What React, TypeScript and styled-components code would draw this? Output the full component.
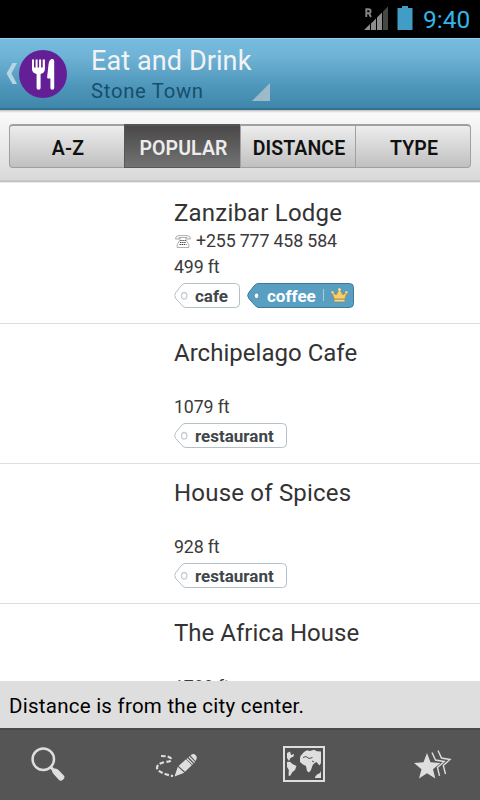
import React from "react";
import styled, { createGlobalStyle, css } from "styled-components";

const GlobalStyle = createGlobalStyle`
  * { box-sizing: border-box; }
  body { margin: 0; background: #fff; font-family: Roboto, "Noto Sans", sans-serif; }
  svg { display: block; flex: none; }
`;

const Screen = styled.div`
  width: 480px;
  height: 800px;
  display: flex;
  flex-direction: column;
  overflow: hidden;
  background: #fff;
`;

const StatusBar = styled.div`
  height: 38px;
  flex: none;
  background: #000;
  display: flex;
  justify-content: flex-end;
  align-items: flex-start;
  padding-right: 9px;
`;

const Clock = styled.span`
  width: 48px;
  margin-left: 10px;
  color: #33b5e5;
  font-size: 24.5px;
  line-height: 40px;
  letter-spacing: 0;
  white-space: nowrap;
`;

const Header = styled.header`
  height: 72px;
  flex: none;
  display: flex;
  background: linear-gradient(#76badd 0%, #6fb3d6 25%, #4e97bb 68%, #3f87ab 100%);
  border-top: 1px solid #92d0ef;
  border-bottom: 2px solid #33718f;
`;

const Brand = styled.div`
  display: flex;
  align-items: flex-start;
  width: 91px;
  padding: 10px 0 0 6px;
`;

const Titles = styled.div`
  width: 180px;
  padding-top: 6px;
`;

const Title = styled.h1`
  margin: 0;
  font-weight: 400;
  font-size: 27px;
  line-height: 32px;
  letter-spacing: 0.1px;
  color: #f3f3f3;
  white-space: nowrap;
`;

const SubtitleRow = styled.div`
  display: flex;
  justify-content: space-between;
  height: 28px;
`;

const Subtitle = styled.span`
  font-size: 20.3px;
  line-height: 28px;
  letter-spacing: 0.7px;
  color: #174f6c;
`;

const DropdownMark = styled.svg`
  margin-top: 6px;
`;

const TabStrip = styled.div`
  height: 73px;
  flex: none;
  padding: 14px 9px 0;
  background: linear-gradient(#b4b4b4 0, #d9d9d9 1px, #f9f9f9 3px, #f7f7f7 10px, #d9d9d9 70px, #b5b5b5 71px, #d0d0d0 72px, #fff 73px);
`;

const Tabs = styled.div`
  display: grid;
  grid-template-columns: 115px 116px 115px 116px;
  grid-template-rows: 44px;
`;

const Tab = styled.div<{ $active?: boolean }>`
  border: solid #a39e9f;
  border-width: 2px 0 1px 1px;
  background: linear-gradient(#ededed, #c0c0c0);
  color: #111;
  font-weight: 600;
  font-size: 19.5px;
  line-height: 46px;
  letter-spacing: 0.1px;
  text-align: center;
  white-space: nowrap;
  padding-left: 2px;
  &:first-child { border-radius: 4px 0 0 4px; }
  &:last-child { border-radius: 0 4px 4px 0; border-right-width: 1px; }
  ${(p) =>
    p.$active &&
    css`
      color: #ececec;
      border-color: #565656;
      background: linear-gradient(#4a4848, #737373);
    `}
`;

const List = styled.main`
  flex: 1;
  min-height: 0;
  overflow: hidden;
`;

const Row = styled.article`
  height: 141px;
  margin-bottom: -1px;
  display: flex;
  flex-direction: column;
  padding: 14px 0 0 174px;
  border-bottom: 1px solid #dedede;
`;

const Name = styled.h2<{ $spacing: number }>`
  margin: 0;
  height: 31px;
  font-weight: 400;
  font-size: 24px;
  line-height: 32px;
  letter-spacing: ${(p) => p.$spacing}px;
  color: #333;
`;

const Detail = styled.div`
  height: 26px;
  display: flex;
  align-items: center;
  font-size: 17.8px;
  line-height: 26px;
  letter-spacing: -0.15px;
  color: #3a3a3a;
  white-space: nowrap;
`;

const PhoneGlyph = styled.svg`
  margin: 0 5px 0 1px;
`;

const TagRow = styled.div`
  display: flex;
  gap: 7px;
  margin-top: 3px;
`;

const TagBox = styled.div<{ $width: number }>`
  position: relative;
  width: ${(p) => p.$width}px;
  height: 25px;
`;

const TagShape = styled.svg`
  position: absolute;
  inset: 0;
`;

const TagLabel = styled.span<{ $light?: boolean }>`
  position: relative;
  display: block;
  padding-left: ${(p) => (p.$light ? 20 : 21)}px;
  font-weight: 700;
  font-size: 17px;
  line-height: 26px;
  color: ${(p) => (p.$light ? "#fff" : "#3f474b")};
`;

const Crown = styled.svg`
  position: absolute;
  left: 76px;
  top: 4px;
`;

const Notice = styled.div`
  height: 47px;
  flex: none;
  background: #dedede;
  color: #000;
  padding-left: 9px;
  font-size: 20.5px;
  line-height: 50px;
  letter-spacing: 0.25px;
  white-space: nowrap;
`;

const BottomBar = styled.nav`
  height: 72px;
  flex: none;
  display: grid;
  grid-template-columns: repeat(4, 1fr);
  background: #555;
  border-top: 2px solid #4a4a4a;
`;

const Action = styled.button`
  border: 0;
  padding: 0;
  background: none;
  display: flex;
  align-items: flex-start;
  justify-content: flex-start;
`;

const SignalSvg = styled.svg`
  margin-top: 6px;
`;

const BatterySvg = styled.svg`
  margin: 6px 0 0 8px;
`;

function SignalIcon() {
  return (
    <SignalSvg width="25" height="24" viewBox="0 0 25 24">
      <path d="M0 24 L6 18 V24Z M7 17.5 L12 12.5 V24 H7Z M13 11.5 L18 6.5 V24 H13Z" fill="#8d8d8d" />
      <path d="M19 5.5 L24 .5 V24 H19Z" fill="#454745" />
      <path d="M2.3 11 V3.3 H4.7 Q6.6 3.3 6.6 5.2 Q6.6 7.2 4.7 7.2 H2.3 M4.8 7 L7 11" fill="none" stroke="#858585" strokeWidth="1.9" />
    </SignalSvg>
  );
}

function BatteryIcon() {
  return (
    <BatterySvg width="16" height="24" viewBox="0 0 16 24">
      <path d="M5 0 H11 V2 H15.5 V24 H.5 V2 H5Z" fill="#419dc5" />
    </BatterySvg>
  );
}

function BrandIcon() {
  return (
    <svg width="62" height="50" viewBox="0 0 62 50">
      <path d="M6.5 14 H11 L5.4 24.5 L11 35 H6.5 L.5 24.5Z" fill="#b5d5e5" />
      <circle cx="37" cy="25" r="24" fill="#641f96" />
      <path
        d="M26 10.5 h2 v8 h1.6 v-8 h2 v8 h1.5 v-8 h2 v8 h1.6 v-8 h2.2 v9.5 q0 4-4.3 5 v14 q0 1.8-2 1.8 t-2-1.8 v-14 q-4.6-1-4.6-5Z"
        fill="#fff"
      />
      <path d="M46.5 10 q1.7 0 1.7 2 v27 q0 1.8-1.9 1.8 t-1.9-1.8 v-9.5 h-2.6 q-.8 0-.6-2 l1.3-12 q.6-5.5 4-5.5Z" fill="#fff" />
    </svg>
  );
}

function Phone() {
  return (
    <PhoneGlyph width="16" height="13" viewBox="0 0 16 13" fill="none" stroke="#999" strokeWidth=".8">
      <path d="M.5 4 Q.5 .6 4 .6 H12 Q15.5 .6 15.5 4 H12 V2.5 H4 V4Z M5 3 V5 L2.2 9.5 V12.5 H13.8 V9.5 L11 5 V3" />
      <path d="M5.3 5.5 H10.8 M5 7.5 H11 M4.5 9.5 H11.5" stroke="#444" strokeWidth="1.2" strokeDasharray="1.4 .7" />
    </PhoneGlyph>
  );
}

function Tag({ label, width, featured }: { label: string; width: number; featured?: boolean }) {
  const outline = `M11 .5 H${width - 4.5} Q${width - 0.5} .5 ${width - 0.5} 4.5 V20.5 Q${width - 0.5} 24.5 ${width - 4.5} 24.5 H12 Q10 24.5 8 22.5 L1.8 15.5 Q-.5 12.5 1.8 9.5 L7 3 Q9 .5 11 .5Z`;
  return (
    <TagBox $width={width}>
      <TagShape width={width} height="25">
        <path d={outline} fill={featured ? "#589fc2" : "#fff"} stroke={featured ? "#397b9b" : "#b4c1c9"} />
        {featured ? (
          <>
            <ellipse cx="9.5" cy="12.8" rx="2.2" ry="2.7" fill="#fff" stroke="#397b9b" strokeWidth=".6" />
            <path d="M76.5 6 V18" stroke="#a9cbd9" />
          </>
        ) : (
          <ellipse cx="10.2" cy="12.8" rx="2.7" ry="3.3" fill="#fff" stroke="#c8d0d5" strokeWidth="1.3" />
        )}
      </TagShape>
      <TagLabel $light={featured}>{label}</TagLabel>
      {featured && (
        <Crown width="34" height="18" viewBox="-8 0 34 18">
          <path d="M3.2 12 L.8 5 L5.2 7.8 L8.5 2 L11.8 7.8 L16.2 5 L13.8 12Z" fill="#f7cf68" stroke="#a98243" strokeWidth=".7" />
          <path d="M3.2 12.4 H13.8 V14.8 H3.2Z" fill="#f5dc94" stroke="#a98243" strokeWidth=".5" />
          <circle cx="8.5" cy="2.6" r="1.4" fill="#ffe49a" />
          <circle cx="1.6" cy="5.3" r="1.4" fill="#f5cc6b" />
          <circle cx="15.4" cy="5.3" r="1.4" fill="#f5cc6b" />
        </Crown>
      )}
    </TagBox>
  );
}

function SearchIcon() {
  return (
    <svg width="120" height="70" viewBox="0 0 120 70">
      <circle cx="43.3" cy="29.2" r="10.7" fill="none" stroke="#dedede" strokeWidth="2.5" />
      <path d="M50.5 37 L54.5 41" stroke="#dedede" strokeWidth="3" />
      <path d="M54.2 38.5 Q57 38 59 40.5 L63.8 45.5 Q65.5 47.2 63.2 49.5 Q60.8 51.7 59 50 L54 44.5 Q51.5 42 52 40Z" fill="#dedede" />
    </svg>
  );
}

function PencilIcon() {
  return (
    <svg width="120" height="70" viewBox="0 0 120 70">
      <path
        d="M41 26 Q51 26 51.5 29.5 Q51 31.5 45 32 Q37 33.5 37 38 Q38 43 53 46"
        fill="none"
        stroke="#dedede"
        strokeWidth="2.2"
        strokeDasharray="4.6 2"
      />
      <path d="M54.5 46.5 L57.8 36.8 L64.3 42.7Z M58.6 36 L66 29.3 L71.8 35.3 L65 41.8Z" fill="#dedede" />
      <path d="M67 28.5 L72.7 34.2 M69 26.7 L74.6 32.5" stroke="#dedede" strokeWidth="1.3" />
      <path d="M70.5 25.5 Q73.5 22.7 75.7 25.2 Q78 27.5 75.4 31Z" fill="#dedede" />
    </svg>
  );
}

function MapIcon() {
  return (
    <svg width="120" height="70" viewBox="0 0 120 70">
      <rect x="44" y="17" width="40" height="34" fill="#515151" stroke="#dedede" strokeWidth="2" />
      <g fill="#dedede">
        <path d="M47 23 L50 21.5 L51 25 L54 24 L53.5 26.5 L50.5 28 L49 31 L47 28Z" />
        <path d="M47 32 L50 31.8 L52.5 34 L56.5 36 L55 40 L52.5 42 L50 46 L48.5 45.5 L48.8 40 L47 37Z" />
        <path d="M60.5 26 L64 22 L67 20.3 L70 21 L74 19.8 L77 21.2 L81 21.5 V33 L79.5 35.5 L76.5 32 L74 33.5 L72.5 35.5 L71 40 L69 42.5 L67 41 L66 36 L63 34.5 L60 32 V28.5Z" />
        <path d="M75 47 L77 44.5 L80 43 L81 41 V48 H75Z" />
      </g>
      <path d="M63 27.5 L66 26.5 L69 28.5 L72.5 27.5 M72 31 L74 32" stroke="#515151" fill="none" />
    </svg>
  );
}

function StarsIcon() {
  return (
    <svg width="120" height="70" viewBox="0 0 120 70">
      <path d="M67 23 L70.5 32.3 L80.5 33 L73 39.2 L75.3 48.5 L67 43.3 L59 48.5 L61.5 39.2 L54 33 L63.5 32.3Z" fill="#dedede" />
      <path
        d="M72 22.5 L75.5 30 L84.2 31.5 L77.5 37.5 L79.5 45.8 M78 20.5 L81.5 28 L90 29.5 L83.3 35.5 L85.5 44"
        fill="none"
        stroke="#dedede"
        strokeWidth="1.4"
      />
    </svg>
  );
}

const places = [
  { name: "Zanzibar Lodge", spacing: 0.2, phone: "+255 777 458 584", distance: "499 ft", tags: [{ label: "cafe", width: 66 }, { label: "coffee", width: 107, featured: true }] },
  { name: "Archipelago Cafe", spacing: 0.02, distance: "1079 ft", tags: [{ label: "restaurant", width: 113 }] },
  { name: "House of Spices", spacing: 0.2, distance: "928 ft", tags: [{ label: "restaurant", width: 113 }] },
  { name: "The Africa House", spacing: 0.02, distance: "1788 ft", tags: [] },
];

export default function App() {
  return (
    <>
      <GlobalStyle />
      <Screen>
        <StatusBar>
          <SignalIcon />
          <BatteryIcon />
          <Clock>9:40</Clock>
        </StatusBar>
        <Header>
          <Brand>
            <BrandIcon />
          </Brand>
          <Titles>
            <Title>Eat and Drink</Title>
            <SubtitleRow>
              <Subtitle>Stone Town</Subtitle>
              <DropdownMark width="19" height="18" viewBox="0 0 19 18">
                <path d="M0 18 L18 0 V18Z" fill="#9dbac8" />
              </DropdownMark>
            </SubtitleRow>
          </Titles>
        </Header>
        <TabStrip>
          <Tabs>
            <Tab>A-Z</Tab>
            <Tab $active>POPULAR</Tab>
            <Tab>DISTANCE</Tab>
            <Tab>TYPE</Tab>
          </Tabs>
        </TabStrip>
        <List>
          {places.map((p) => (
            <Row key={p.name}>
              <Name $spacing={p.spacing}>{p.name}</Name>
              <Detail>
                {p.phone && <Phone />}
                {p.phone}
              </Detail>
              <Detail>{p.distance}</Detail>
              <TagRow>
                {p.tags.map((t) => (
                  <Tag key={t.label} {...t} />
                ))}
              </TagRow>
            </Row>
          ))}
        </List>
        <Notice>Distance is from the city center.</Notice>
        <BottomBar>
          <Action aria-label="Search"><SearchIcon /></Action>
          <Action aria-label="Edit"><PencilIcon /></Action>
          <Action aria-label="Map"><MapIcon /></Action>
          <Action aria-label="Favorites"><StarsIcon /></Action>
        </BottomBar>
      </Screen>
    </>
  );
}
